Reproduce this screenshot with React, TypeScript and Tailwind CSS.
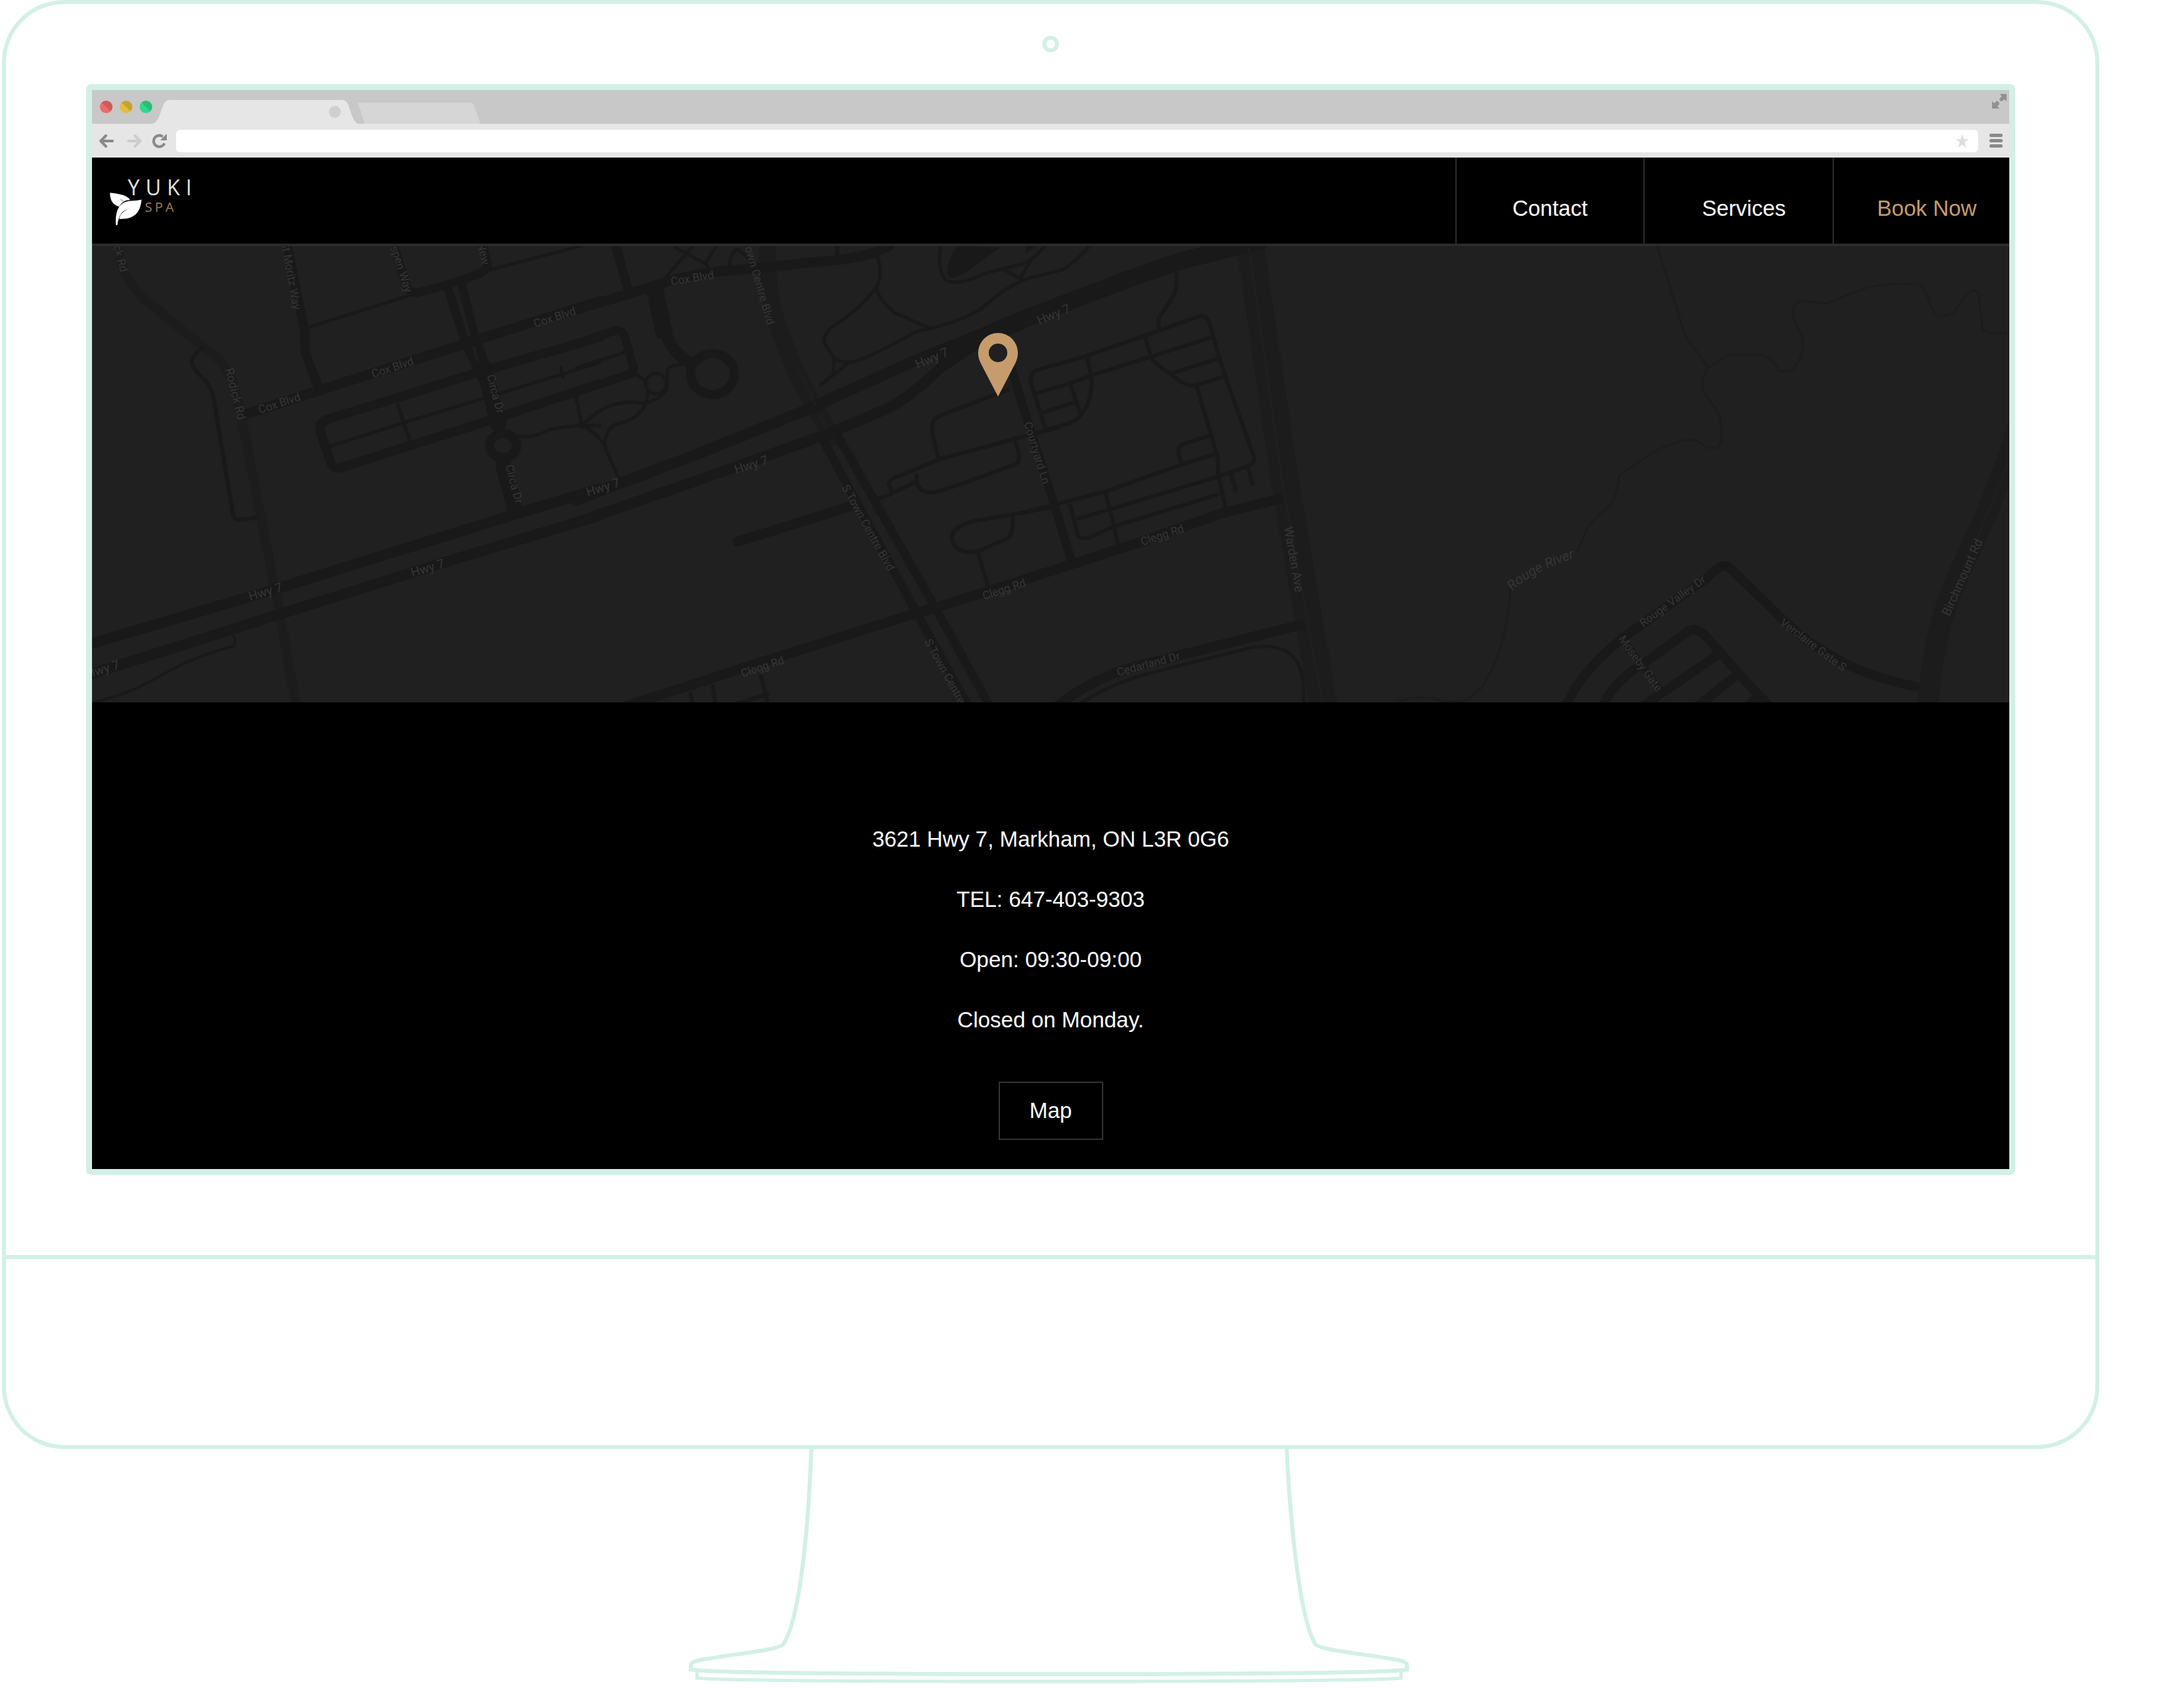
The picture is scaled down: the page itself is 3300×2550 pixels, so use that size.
import React from "react";

type Road = { d: string; w: number; major?: boolean };
type Tile = { transform: string; roads: Road[] };
type Label = { text: string; x: number; y: number; angle: number; size?: number };

const TILES: Tile[] = [
  {
    transform: "translate(130 360) scale(0.4847 0.4529)",
    roads: [
      { d: "M95 10C110 90 120 140 180 200C280 290 350 350 400 390C450 430 465 500 485 600L600 1230L655 1560", w: 14, major: true },
      { d: "M360 365L332 400Q325 420 345 445L380 485Q398 515 402 560L458 920Q462 942 475 940L530 932", w: 6 },
      { d: "M625 10L660 200L682 310Q678 370 690 400L725 500", w: 14 },
      { d: "M690 298L1010 190L1040 180M1260 105L1560 20", w: 5 },
      { d: "M955 10L1000 160Q1010 185 1040 180L1110 160L1210 125Q1260 105 1250 80L1235 10", w: 13 },
      { d: "M495 588L720 510L1200 345L1600 210", w: 15 },
      { d: "M1128 165L1180 340L1235 470M1170 150L1215 340L1260 460", w: 13 },
      { d: "M1245 450L1285 620M1302 762L1335 895", w: 24 },
      { d: "M1258 692A42 40 0 1 1 1342 692A42 40 0 1 1 1258 692", w: 14 },
      { d: "M1600 330L1200 455L750 605Q720 617 732 650L760 740Q770 775 800 763L1250 610L1600 485", w: 14 },
      { d: "M765 692L990 615L1250 530L1600 415M972 555L1010 680M1527 530L1547 630M1345 660Q1400 665 1430 645T1600 625M1480 430L1486 462", w: 5 },
      { d: "M-10 1360L560 1180L1340 920L1600 835M-10 1462L600 1255L1150 1070L1600 925", w: 16 },
      { d: "M20 1550C240 1490 220 1430 460 1360Q470 1350 460 1325", w: 4 },
    ],
  },
  {
    transform: "translate(880 360) scale(0.4592 0.4529)",
    roads: [
      { d: "M610 10C600 200 640 290 700 440L820 665", w: 26, major: true },
      { d: "M105 10L150 170", w: 14 },
      { d: "M-40 245L0 232L240 158Q300 130 440 112L860 70Q960 55 1010 25", w: 15 },
      { d: "M270 135L360 30M305 30L405 85L440 25M405 85L420 105M485 100Q480 55 510 35L570 85", w: 5 },
      { d: "M838 20L838 65", w: 7 },
      { d: "M238 170L268 310", w: 26 },
      { d: "M268 300Q290 380 355 415", w: 18 },
      { d: "M356 453A72 68 0 1 1 500 453A72 68 0 1 1 356 453", w: 14 },
      { d: "M-20 352L100 310Q130 300 140 330L168 430Q172 450 150 455L-20 512", w: 13 },
      { d: "M-20 432L140 380M180 455L205 475M340 418L300 425Q278 430 280 450L278 490M0 625Q80 530 200 550Q260 540 278 500M215 515Q210 600 110 620Q70 640 75 700L120 800M-10 620Q50 650 72 690", w: 5 },
      { d: "M208 485A34 34 0 1 1 276 485A34 34 0 1 1 208 485", w: 5 },
      { d: "M790 670L1100 1250L1270 1560M835 650L1160 1230L1340 1560", w: 13 },
      { d: "M-20 872L340 735L720 580L1100 405L1360 300", w: 17 },
      { d: "M-20 948L400 800L800 655L1000 570Q1080 530 1180 430L1300 350", w: 16 },
      { d: "M1190 390L1350 312L1500 248", w: 25 },
      { d: "M970 60Q990 120 970 155Q960 190 1030 250L1140 298M965 165Q920 230 830 290Q780 330 800 355L825 395Q850 420 900 410Q950 395 1100 310Q1260 280 1330 220Q1420 140 1500 125L1580 105Q1620 80 1670 25M785 488L825 455L828 400M828 455L870 418", w: 5 },
      { d: "M1180 20Q1165 100 1195 140Q1240 160 1330 115L1450 85Q1500 60 1520 25M1380 100L1440 135L1475 75", w: 5 },
      { d: "M510 1012L900 888", w: 15 },
      { d: "M970 870L1010 855L1100 810M1020 850L1008 820Q1010 800 1050 790L1180 735L1568 630M1170 730L1152 650Q1145 600 1180 590L1400 505M1100 790Q1095 850 1150 848Q1200 840 1420 755Q1445 745 1435 715L1425 680", w: 6 },
      { d: "M1540 898L1280 945Q1200 970 1220 1015Q1240 1060 1310 1040L1400 1000Q1420 985 1415 930M1300 1045L1335 1160", w: 6 },
      { d: "M140 1562L600 1410L1100 1250L1360 1170", w: 15 },
      { d: "M355 1520L368 1568M430 1495L440 1568M585 1450L612 1560M500 1555L610 1520", w: 6 },
    ],
  },
  {
    transform: "translate(1500 360) scale(0.4592 0.4529)",
    roads: [
      { d: "M845 10L960 800L1090 1570", w: 42, major: true },
      { d: "M0 315L150 252Q400 150 620 75L880 10", w: 26 },
      { d: "M60 430L115 610L200 880L260 1080", w: 13 },
      { d: "M605 120Q610 165 590 200L550 260Q540 275 548 300", w: 6 },
      { d: "M175 640L125 480Q122 445 150 438L310 392L500 325L680 260Q705 252 715 290L755 430L860 730Q862 750 840 760L740 795L400 900L280 935", w: 6 },
      { d: "M150 515L250 485L330 455L520 395L720 330M590 450L745 400M500 325L520 395Q530 420 590 455Q630 495 670 490L765 460M670 490L740 730L742 790L768 905M310 392L325 460Q330 540 290 590Q270 615 240 620L0 690M255 485L290 590M170 580L275 545", w: 6 },
      { d: "M710 660L630 685Q605 695 612 720L622 755M730 720L620 755L370 845L215 885L100 915M370 845L395 940L412 1020M255 890L280 990Q290 1005 320 998L400 960L740 855M785 790L800 840M840 765L855 820", w: 6 },
      { d: "M0 1173L260 1087L500 1008L760 915L940 870", w: 15 },
      { d: "M200 1570Q330 1460 500 1420L1010 1290", w: 15 },
      { d: "M290 1550Q400 1480 520 1450L850 1365Q1000 1340 1020 1470L1025 1560", w: 5 },
    ],
  },
  {
    transform: "translate(2200 360) scale(0.5485 0.4529)",
    roads: [
      { d: "M1550 620Q1500 830 1400 1080Q1310 1300 1300 1575", w: 32, major: true },
      { d: "M553 20L610 240Q625 310 640 340L695 432", w: 3, major: true },
      { d: "M1530 315L1485 318Q1450 315 1450 300L1440 185Q1430 165 1415 180Q1395 200 1370 250L1330 262Q1310 240 1300 200Q1295 165 1270 153L1215 152Q1150 155 1120 170L1018 218L960 210Q930 215 930 235Q925 270 950 320Q970 380 925 440L890 445Q875 400 840 388L750 390L695 432Q670 470 682 515Q730 580 730 620Q735 700 715 700L690 697Q660 665 630 672Q570 695 545 712L450 790Q440 870 425 890Q370 940 355 985L335 1045M150 1170Q145 1260 130 1330Q110 1430 70 1500L30 1540Q-20 1555 -60 1535Q-120 1525 -160 1545", w: 3, major: true },
      { d: "M300 1565Q350 1430 480 1315L690 1135Q735 1075 755 1100L870 1235Q960 1350 1075 1420Q1150 1465 1265 1495", w: 14 },
      { d: "M400 1570Q430 1480 520 1415L640 1310Q665 1295 690 1330L800 1480L870 1570M510 1565L720 1390M660 1565L770 1460M800 1565L830 1530", w: 14 },
      { d: "M455 1330L560 1500", w: 10 },
    ],
  },
];

const LABELS: Label[] = [
  { text: "Hwy 7", x: 401, y: 894, angle: -17, size: 19 },
  { text: "Hwy 7", x: 646, y: 858, angle: -17, size: 19 },
  { text: "Hwy 7", x: 155, y: 1011, angle: -17, size: 19 },
  { text: "Hwy 7", x: 911, y: 736, angle: -18, size: 19 },
  { text: "Hwy 7", x: 1135, y: 702, angle: -18, size: 19 },
  { text: "Hwy 7", x: 1408, y: 541, angle: -23, size: 19 },
  { text: "Hwy 7", x: 1592, y: 475, angle: -22, size: 19 },
  { text: "Cox Blvd", x: 593, y: 555, angle: -18 },
  { text: "Cox Blvd", x: 422, y: 609, angle: -18 },
  { text: "Cox Blvd", x: 838, y: 479, angle: -18 },
  { text: "Cox Blvd", x: 1046, y: 420, angle: -9 },
  { text: "Rodick Rd", x: 178, y: 374, angle: 75 },
  { text: "St Moritz Way", x: 440, y: 416, angle: 80 },
  { text: "Aspen Way", x: 605, y: 401, angle: 72 },
  { text: "New", x: 731, y: 383, angle: 78 },
  { text: "Rodick Rd", x: 356, y: 595, angle: 76, size: 18 },
  { text: "Circa Dr", x: 749, y: 595, angle: 75 },
  { text: "Circa Dr", x: 777, y: 731, angle: 75 },
  { text: "S Town Centre Blvd", x: 1145, y: 420, angle: 74 },
  { text: "S Town Centre Blvd", x: 1312, y: 797, angle: 61 },
  { text: "S Town Centre Blvd", x: 1437, y: 1030, angle: 61 },
  { text: "Clegg Rd", x: 1152, y: 1007, angle: -18 },
  { text: "Clegg Rd", x: 1517, y: 890, angle: -18 },
  { text: "Clegg Rd", x: 1756, y: 808, angle: -18 },
  { text: "Courtyard Ln", x: 1567, y: 684, angle: 73 },
  { text: "Warden Ave", x: 1955, y: 845, angle: 80, size: 19 },
  { text: "Cedarland Dr", x: 1735, y: 1003, angle: -15 },
  { text: "Rouge Valley Dr", x: 2527, y: 908, angle: -36 },
  { text: "Verclaire Gate S", x: 2740, y: 974, angle: 37 },
  { text: "Moseby Gate", x: 2479, y: 1002, angle: 54 },
  { text: "Birchmount Rd", x: 2965, y: 872, angle: -66, size: 19 },
];

function StreetMap() {
  return (
    <svg viewBox="139 372 2897 689" className="block h-auto w-full bg-[#202020]" role="img" aria-label="Street map">
      {TILES.map((tile) => (
        <g key={tile.transform} transform={tile.transform} fill="none" strokeLinejoin="round" strokeLinecap="round">
          {tile.roads.map((road) => (
            <path key={road.d} d={road.d} stroke={road.major ? "#1c1c1c" : "#191919"} strokeWidth={road.w} vectorEffect="non-scaling-stroke" />
          ))}
        </g>
      ))}
      <path d="M1447 371L1511 374L1459 412Q1431 428 1431 410Q1431 392 1447 371Z" fill="#191919" />
      <path d="M1550 371L1567 371L1549 383Z" fill="#191919" />
      <g fill="none" stroke="#202020" strokeWidth="2">
        <path d="M1887 374L1940 745L1998 1061" />
        <path d="M1205 555L1232 612M1238 625L1250 650" />
        <path d="M3034 700Q3010 760 2985 820" />
        <path d="M690 434L697 462M702 480L710 508M716 524L721 545" strokeWidth="3" />
      </g>
      <g fill="#353535" fontFamily="Roboto, 'Open Sans', sans-serif" textAnchor="middle" dominantBaseline="central">
        {LABELS.map((l) => (
          <text key={`${l.x}-${l.y}`} x={l.x} y={l.y} fontSize={l.size ?? 17} transform={`rotate(${l.angle} ${l.x} ${l.y})`}>
            {l.text}
          </text>
        ))}
      </g>
      <path id="river" d="M2285 893Q2315 862 2395 838" fill="none" />
      <text fill="#353535" fontFamily="Roboto, 'Open Sans', sans-serif" fontSize="21" fontStyle="italic">
        <textPath href="#river">Rouge River</textPath>
      </text>
      <path
        d="M1508 503A30 30 0 0 1 1538 533Q1538 541 1534 549L1508 599L1482 549Q1478 541 1478 533A30 30 0 0 1 1508 503ZM1508 519A14 14 0 1 0 1508 547A14 14 0 1 0 1508 519Z"
        fill="#c69c6d"
        fillRule="evenodd"
      />
    </svg>
  );
}

const DOTS = [
  "bg-[linear-gradient(45deg,#ee6a68_50%,#d05a58_50%)]",
  "bg-[linear-gradient(45deg,#e2bd3c_50%,#c6a431_50%)]",
  "bg-[linear-gradient(45deg,#2fd988_50%,#2bbd77_50%)]",
];

function BrowserBar() {
  return (
    <div className="bg-[#e6e6e6]">
      <div className="flex h-[51px] items-end bg-[#c8c8c8] pr-1 pl-3">
        <div className="flex gap-[11px] self-center">
          {DOTS.map((dot) => (
            <span key={dot} className={`size-[19px] rounded-full ${dot}`} />
          ))}
        </div>
        <svg width="500" height="36" viewBox="0 0 500 36" className="block" aria-hidden="true">
          <path d="M303 4H481Q485 4 487 10L496 36H318Q308 30 303 4Z" fill="#d6d6d6" />
          <path d="M300 4L311 4L321 36H300Z" fill="#c8c8c8" />
          <path d="M0 36Q7 34 10 26L17 7Q20 0 27 0H287Q293 0 296 7L302 24Q306 34 311 36Z" fill="#e6e6e6" />
          <circle cx="276" cy="18" r="9" fill="#cfcfcf" />
        </svg>
        <svg width="22" height="22" viewBox="0 0 22 22" className="mt-1.5 ml-auto block self-start" fill="#919191" aria-hidden="true">
          <path d="M12 0H22V11L18.500 8L15.500 10.500Q13.500 11.500 12 10Q10.500 8.500 11.500 7L14.500 3.500Z" />
          <path d="M0 11L3.500 14L5.500 11.500Q8 10 10 12Q12 14 10.500 16L8 18.500L11 22H0Z" />
        </svg>
      </div>
      <div className="flex h-[51px] items-center pr-[10px] pl-[11px]">
        <button aria-label="Back" className="mr-5">
          <svg width="22" height="20" viewBox="0 0 22 20" fill="none" stroke="#898989" strokeWidth="4" strokeLinecap="round" className="block">
            <path d="M20 10H4M10 2L2 10L10 18" />
          </svg>
        </button>
        <button aria-label="Forward" className="mr-4">
          <svg width="22" height="20" viewBox="0 0 22 20" fill="none" stroke="#cdcdcd" strokeWidth="4" strokeLinecap="round" className="block">
            <path d="M2 10H18M12 2L20 10L12 18" />
          </svg>
        </button>
        <button aria-label="Reload" className="mr-[14px]">
          <svg width="22" height="22" viewBox="0 0 22 22" className="block">
            <path d="M18.500 14.500A8.500 8.500 0 1 1 16 4.500" fill="none" stroke="#898989" strokeWidth="4" />
            <path d="M22 0V10H12Z" fill="#898989" />
          </svg>
        </button>
        <div className="flex h-[34px] flex-1 items-center rounded-md bg-white pr-[14px]">
          <input aria-label="Address" className="h-full min-w-0 flex-1 bg-transparent px-3 text-xl outline-none" />
          <svg width="20" height="20" viewBox="0 0 20 20" fill="#dedede" aria-hidden="true">
            <path d="M10 0L12.400 7.200H20L13.800 11.800L16.200 20L10 15.200L3.800 20L6.200 11.800L0 7.200H7.600Z" />
          </svg>
        </div>
        <button aria-label="Menu" className="ml-[17px] flex flex-col gap-[3px]">
          <span className="h-[5px] w-5 rounded-full bg-[#898989]" />
          <span className="h-[5px] w-5 rounded-full bg-[#898989]" />
          <span className="h-[5px] w-5 rounded-full bg-[#898989]" />
        </button>
      </div>
    </div>
  );
}

function SiteHeader() {
  return (
    <header className="flex h-[134px] border-b-4 border-[#2b2b2b] bg-black">
      <a href="#home" aria-label="Yuki Spa" className="relative mt-[27px] ml-[26px] flex h-20 w-32 flex-col items-end font-['Open_Sans',sans-serif]">
        <svg width="50" height="53" viewBox="105 510 150 160" className="absolute top-6 left-0" aria-hidden="true">
          <path d="M108 517C150 520 190 530 200 550C175 548 160 562 150 580C120 572 108 550 108 517Z" fill="#fff" />
          <path d="M155 548Q168 548 172 560" stroke="#777" strokeWidth="3" fill="none" />
          <path d="M252 548C248 600 225 640 150 636C154 615 168 600 190 592C165 596 147 618 142 664L135 664C131 610 145 572 175 560C200 550 225 556 252 548Z" fill="#fff" />
        </svg>
        <span className="w-[100px] text-[32px] leading-9 tracking-[9px] text-[#e0e0e0]">YUKI</span>
        <span className="w-[74px] text-xl leading-6 tracking-[4px] text-[#a17c53]">SPA</span>
      </a>
      <nav className="ml-auto flex text-[33px] text-white">
        <a href="#contact" className="flex w-[284px] items-center justify-center border-l-2 border-[#2b2b2b] pt-6">
          Contact
        </a>
        <a href="#services" className="flex w-[286px] items-center justify-center border-l-2 border-[#2b2b2b] pt-6 pl-4">
          Services
        </a>
        <a href="#book" className="flex w-[267px] items-center justify-center border-l-2 border-[#2b2b2b] pt-6 pl-4 text-[#c69c6d]">
          Book Now
        </a>
      </nav>
    </header>
  );
}

function ContactDetails() {
  return (
    <section className="flex flex-col items-center bg-black pt-[161px] pb-11 text-[33px] text-white">
      <address className="text-center leading-[91px] not-italic">
        <p>3621 Hwy 7, Markham, ON L3R 0G6</p>
        <p>TEL: 647-403-9303</p>
        <p>Open: 09:30-09:00</p>
        <p>Closed on Monday.</p>
      </address>
      <button className="mt-12 h-[88px] w-[158px] border-2 border-[#333]">Map</button>
    </section>
  );
}

function Stand() {
  return (
    <svg width="1097" height="361" viewBox="1036 2189 1097 361" className="block" fill="none" stroke="#d2f0e7" strokeWidth="6" aria-hidden="true">
      <path d="M1225 2186C1220 2330 1205 2450 1183 2483C1178 2493 1110 2498 1055 2508Q1043 2511 1043 2515V2522C1060 2526 1200 2529 1584 2529S2108 2526 2125 2522V2515Q2125 2511 2113 2508C2060 2498 1990 2493 1986 2483C1966 2450 1950 2330 1943 2186" />
      <path d="M1052 2526V2535C1080 2538 1200 2540 1584 2540S2090 2538 2116 2535V2526" strokeWidth="5" />
    </svg>
  );
}

export default function App() {
  return (
    <div className="flex min-h-screen flex-col bg-white pr-32 pl-[3px] font-['Liberation_Sans',Arial,sans-serif]">
      <div className="rounded-[94px] border-6 border-[#d2f0e7]">
        <div className="flex flex-col items-center px-[121px] pt-12 pb-[121px]">
          <span className="mb-12 size-[25px] rounded-full border-6 border-[#d2f0e7]" />
          <main className="w-full rounded-lg border-9 border-[#d2f0e7]">
            <BrowserBar />
            <SiteHeader />
            <StreetMap />
            <ContactDetails />
          </main>
        </div>
        <div className="h-[287px] border-t-6 border-[#d2f0e7]" />
      </div>
      <div className="flex justify-center pr-1">
        <Stand />
      </div>
    </div>
  );
}
